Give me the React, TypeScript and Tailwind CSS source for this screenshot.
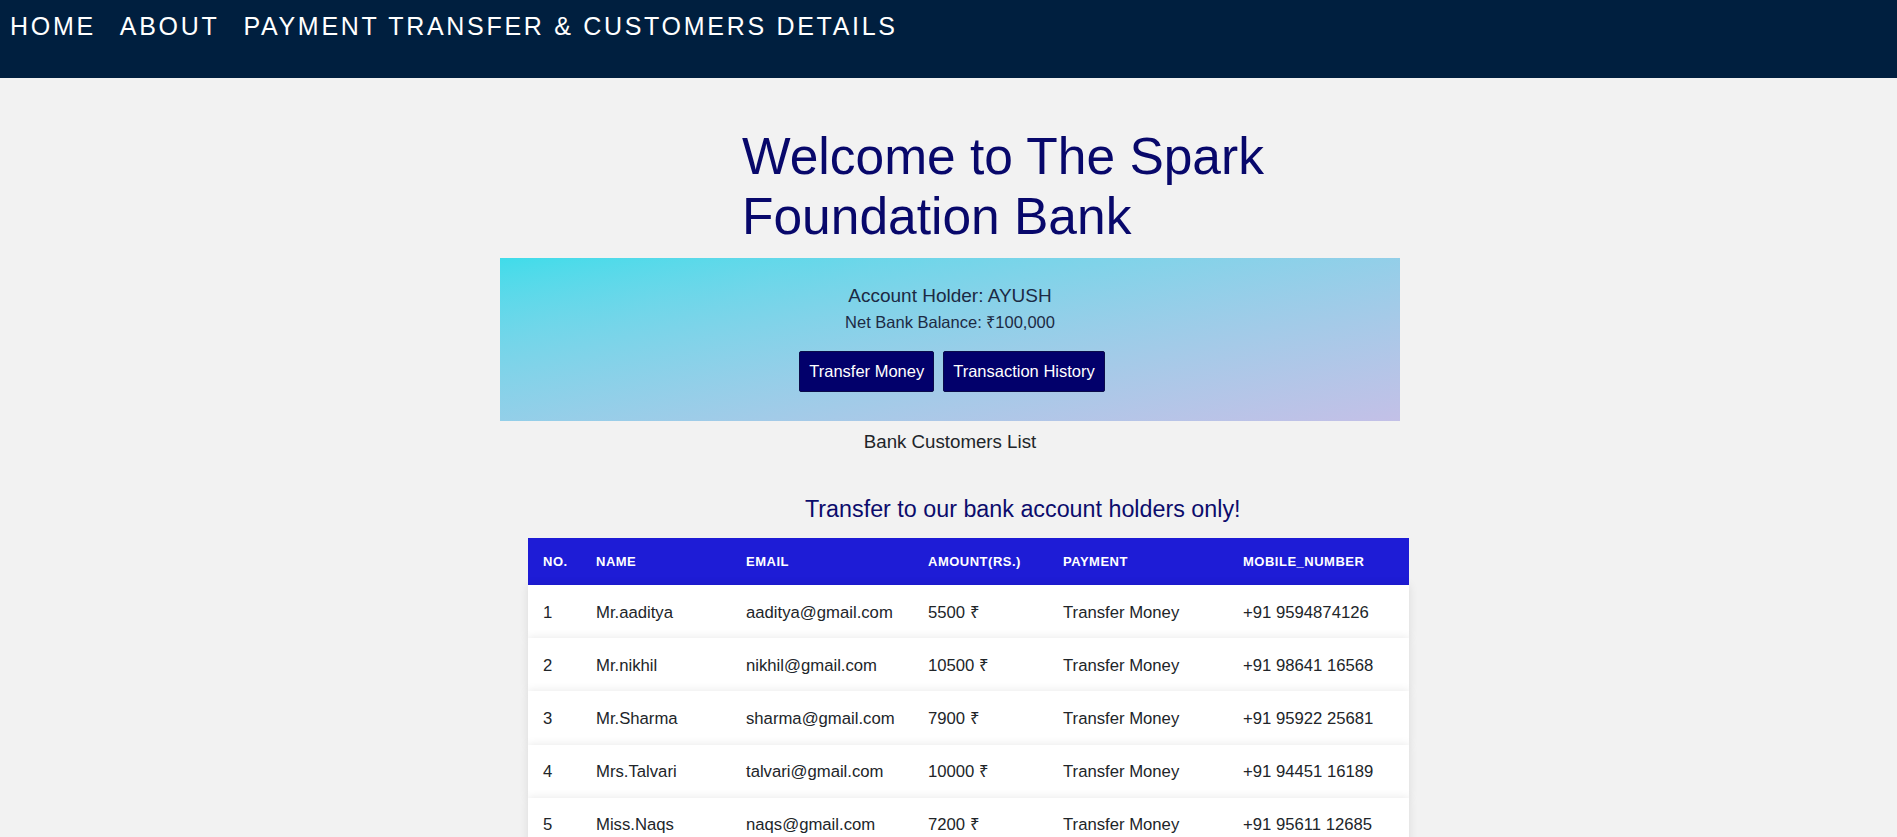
import React from "react";

const navLinks = ["HOME", "ABOUT", "PAYMENT TRANSFER & CUSTOMERS DETAILS"];

const columns = ["No.", "Name", "Email", "Amount(Rs.)", "Payment", "Mobile_Number"];

const customers = [
  { no: 1, name: "Mr.aaditya", email: "aaditya@gmail.com", amount: "5500 ₹", mobile: "+91 9594874126" },
  { no: 2, name: "Mr.nikhil", email: "nikhil@gmail.com", amount: "10500 ₹", mobile: "+91 98641 16568" },
  { no: 3, name: "Mr.Sharma", email: "sharma@gmail.com", amount: "7900 ₹", mobile: "+91 95922 25681" },
  { no: 4, name: "Mrs.Talvari", email: "talvari@gmail.com", amount: "10000 ₹", mobile: "+91 94451 16189" },
  { no: 5, name: "Miss.Naqs", email: "naqs@gmail.com", amount: "7200 ₹", mobile: "+91 95611 12685" },
];

const grid = "grid grid-cols-[53px_150px_182px_135px_180px_181px]";

export default function App() {
  return (
    <div className="min-h-screen bg-[#f2f2f2] font-['Liberation_Sans',Arial,sans-serif] text-[#212529]">
      <nav className="h-[78px] bg-[#001f3f] pl-[10px] pt-[12px]">
        <ul className="flex gap-[24px] text-[25px] leading-[29px] tracking-[2.7px] text-white">
          {navLinks.map((link) => (
            <li key={link}>
              <a href="#">{link}</a>
            </li>
          ))}
        </ul>
      </nav>

      <div className="flex justify-center pl-[3px]">
        <main className="w-[900px]">
          <h1 className="mt-[48px] pl-[242px] text-[51.5px] leading-[60px] text-[#08086b]">
            Welcome to The Spark Foundation Bank
          </h1>

          <section className="mt-[12px] h-[163px] bg-gradient-to-br from-[#3fdcea] to-[#c3c0e7] pt-[27px] text-center text-[#1c2a44]">
            <h3 className="text-[19px] leading-[22px]">Account Holder: AYUSH</h3>
            <p className="mt-[6px] text-[16.5px] leading-[19px]">Net Bank Balance: ₹100,000</p>
            <div className="mt-[19px] flex justify-center gap-[9px] pl-[4px]">
              <button className="h-[41px] rounded-[2px] border border-[#0b0b4a] bg-[#02006b] px-[9px] text-[16.5px] text-white">
                Transfer Money
              </button>
              <button className="h-[41px] rounded-[2px] border border-[#0b0b4a] bg-[#02006b] px-[9px] text-[16.5px] text-white">
                Transaction History
              </button>
            </div>
          </section>

          <h3 className="mt-[10px] text-center text-[18.7px] leading-[22px]">Bank Customers List</h3>

          <h2 className="mt-[43px] pl-[305px] text-[23.3px] leading-[27px] text-[#0c0c6c]">
            Transfer to our bank account holders only!
          </h2>

          <div className="ml-[28px] mt-[15px] w-[881px]">
            <div className={`${grid} h-[47px] items-center bg-[#1e1cd6] text-[13px] font-bold uppercase tracking-[0.5px] text-white`}>
              {columns.map((col) => (
                <div key={col} className="pl-[15px]">
                  {col}
                </div>
              ))}
            </div>
            {customers.map((c) => (
              <div
                key={c.no}
                className={`${grid} relative h-[53.2px] items-center bg-white pt-[1px] text-[16.7px] shadow-[0_0_9px_rgba(0,0,0,0.1)]`}
              >
                <div className="pl-[15px]">{c.no}</div>
                <div className="pl-[15px]">{c.name}</div>
                <div className="pl-[15px]">{c.email}</div>
                <div className="pl-[15px]">{c.amount}</div>
                <div className="pl-[15px]">Transfer Money</div>
                <div className="pl-[15px]">{c.mobile}</div>
              </div>
            ))}
          </div>
        </main>
      </div>
    </div>
  );
}
